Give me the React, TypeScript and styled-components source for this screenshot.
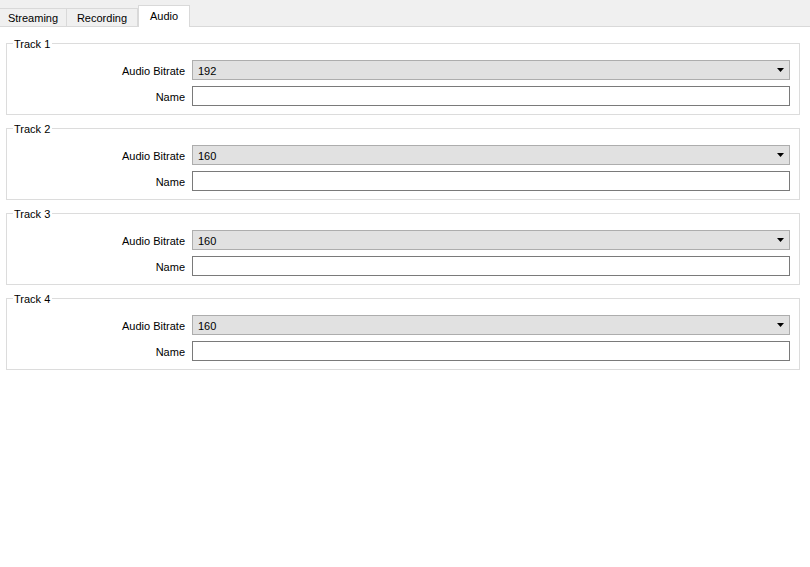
import styled, { createGlobalStyle } from "styled-components";

const GlobalStyle = createGlobalStyle`
  html, body {
    margin: 0;
    padding: 0;
    background: #ffffff;
  }
  body {
    font-family: "Liberation Sans", Arial, sans-serif;
    font-size: 11px;
    color: #000000;
  }
`;

const Window = styled.div`
  width: 810px;
  height: 567px;
  background: #ffffff;
  display: flex;
  flex-direction: column;
`;

const TabBar = styled.div`
  height: 26px;
  background: #f0f0f0;
  border-bottom: 1px solid #d9d9d9;
  display: flex;
  align-items: flex-end;
`;

const Tab = styled.div<{ $w: number; $active?: boolean }>`
  width: ${({ $w }) => $w}px;
  box-sizing: border-box;
  height: ${({ $active }) => ($active ? 22 : 18)}px;
  margin-bottom: ${({ $active }) => ($active ? -1 : 0)}px;
  background: ${({ $active }) => ($active ? "#ffffff" : "#f0f0f0")};
  border: 1px solid #d9d9d9;
  border-bottom: none;
  border-left-width: ${({ $active }) => ($active ? 1 : 0)}px;
  display: flex;
  align-items: center;
  justify-content: center;
  padding-top: ${({ $active }) => ($active ? 0 : 1)}px;
  padding-bottom: ${({ $active }) => ($active ? 1 : 0)}px;
  white-space: nowrap;
`;

const Content = styled.div`
  padding: 16px 10px 0 6px;
  display: flex;
  flex-direction: column;
  gap: 13px;
`;

const GroupBox = styled.div`
  position: relative;
  border: 1px solid #dcdcdc;
  padding: 16px 9px 8px 0;
`;

const GroupTitle = styled.div`
  position: absolute;
  top: -7px;
  left: 6px;
  padding: 0 2px 0 1px;
  line-height: 14px;
  background: #ffffff;
`;

const Form = styled.div`
  display: grid;
  grid-template-columns: 178px 1fr;
  column-gap: 7px;
  row-gap: 6px;
  align-items: center;
`;

const Label = styled.div`
  text-align: right;
  white-space: nowrap;
  padding-top: 2px;
`;

const Combo = styled.div`
  height: 20px;
  box-sizing: border-box;
  background: #e1e1e1;
  border: 1px solid #adadad;
  display: flex;
  align-items: center;
  justify-content: space-between;
  padding: 0 5px 0 5px;
`;

const ComboText = styled.span`
  padding-top: 2px;
`;

const TextField = styled.div`
  height: 20px;
  box-sizing: border-box;
  background: #ffffff;
  border: 1px solid #7a7a7a;
`;

const Arrow = () => (
  <svg width="7" height="4" viewBox="0 0 7 4">
    <polygon points="0,0 7,0 3.5,4" fill="#000000" />
  </svg>
);

const tracks = [
  { name: "Track 1", bitrate: "192" },
  { name: "Track 2", bitrate: "160" },
  { name: "Track 3", bitrate: "160" },
  { name: "Track 4", bitrate: "160" },
];

export default function App() {
  return (
    <>
      <GlobalStyle />
      <Window>
        <TabBar>
          <Tab $w={67}>Streaming</Tab>
          <Tab $w={71}>Recording</Tab>
          <Tab $w={52} $active>
            Audio
          </Tab>
        </TabBar>
        <Content>
          {tracks.map((t) => (
            <GroupBox key={t.name}>
              <GroupTitle>{t.name}</GroupTitle>
              <Form>
                <Label>Audio Bitrate</Label>
                <Combo>
                  <ComboText>{t.bitrate}</ComboText>
                  <Arrow />
                </Combo>
                <Label>Name</Label>
                <TextField />
              </Form>
            </GroupBox>
          ))}
        </Content>
      </Window>
    </>
  );
}
